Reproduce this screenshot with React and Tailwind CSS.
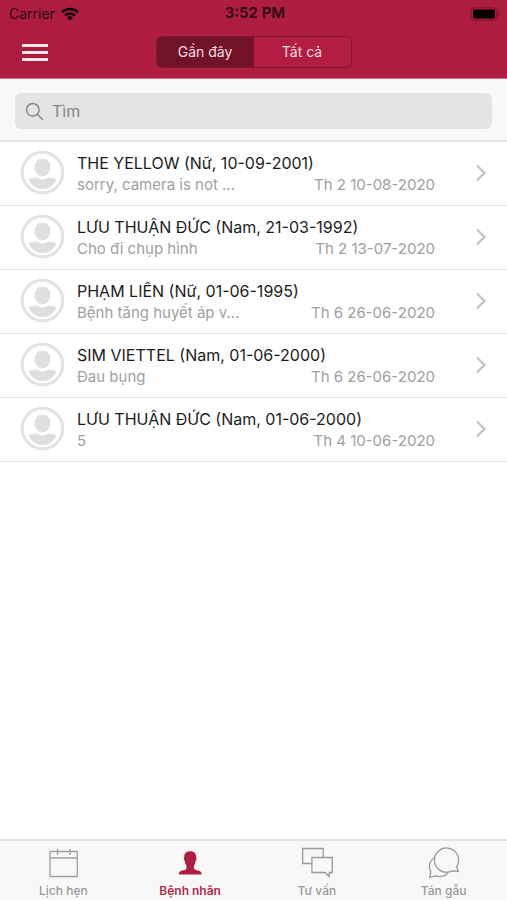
import React, { useState } from 'react';

const patients = [
  { id: 1, name: 'THE YELLOW (Nữ, 10-09-2001)', note: 'sorry, camera is not ...', date: 'Th 2 10-08-2020' },
  { id: 2, name: 'LƯU THUẬN ĐỨC (Nam, 21-03-1992)', note: 'Cho đi chụp hình', date: 'Th 2 13-07-2020' },
  { id: 3, name: 'PHẠM LIÊN (Nữ, 01-06-1995)', note: 'Bệnh tăng huyết áp v...', date: 'Th 6 26-06-2020' },
  { id: 4, name: 'SIM VIETTEL (Nam, 01-06-2000)', note: 'Đau bụng', date: 'Th 6 26-06-2020' },
  { id: 5, name: 'LƯU THUẬN ĐỨC (Nam, 01-06-2000)', note: '5', date: 'Th 4 10-06-2020' },
];

const tabs = [
  { id: 'schedule', label: 'Lịch hẹn', icon: CalendarIcon },
  { id: 'patients', label: 'Bệnh nhân', icon: PersonIcon },
  { id: 'advice', label: 'Tư vấn', icon: AdviceIcon },
  { id: 'chat', label: 'Tán gẫu', icon: ChatIcon },
];

export default function App() {
  const [filter, setFilter] = useState('recent');
  const [tab, setTab] = useState('patients');
  const [query, setQuery] = useState('');

  return (
    <div className="min-h-screen flex flex-col bg-white font-['Inter','Liberation_Sans',sans-serif]">
      <header className="bg-[#ae1c3f] border-b border-[#c9788b]">
        <StatusBar />
        <div className="h-[52px] px-[22px] grid grid-cols-[1fr_196px_1fr] items-center">
          <button type="button" aria-label="Menu" className="w-[26px] flex flex-col gap-1 justify-self-start">
            <span className="h-[3px] w-full bg-[#fbe3ea]"></span>
            <span className="h-[3px] w-full bg-[#fbe3ea]"></span>
            <span className="h-[3px] w-full bg-[#fbe3ea]"></span>
          </button>
          <div className="h-8 flex rounded-md border border-[#7f1530] overflow-hidden text-sm text-[#f8dde4]">
            <Segment label="Gần đây" active={filter === 'recent'} onClick={() => setFilter('recent')} />
            <Segment label="Tất cả" active={filter === 'all'} onClick={() => setFilter('all')} />
          </div>
        </div>
      </header>

      <div className="h-[63px] px-[15px] pt-[14px] bg-[#f8f8f8] border-b-2 border-[#e6e6e6]">
        <label className="h-9 w-full px-[10px] flex items-center gap-2 rounded-md bg-[#e4e4e4]">
          <SearchIcon />
          <input
            type="text"
            aria-label="Tìm"
            placeholder="Tìm"
            value={query}
            onChange={(e) => setQuery(e.target.value)}
            className="flex-1 min-w-0 bg-transparent outline-none text-base text-[#444] placeholder:text-[#858585]"
          />
        </label>
      </div>

      <main className="flex-1">
        <ul>
          {patients.map((p) => (
            <PatientRow key={p.id} patient={p} />
          ))}
        </ul>
      </main>

      <nav className="h-[61px] grid grid-cols-4 bg-[#f8f8f8] border-t-2 border-[#e4e4e4]">
        {tabs.map(({ id, label, icon: Icon }) => (
          <button
            key={id}
            type="button"
            onClick={() => setTab(id)}
            className={`flex flex-col items-center pt-1 text-xs leading-4 ${id === tab ? 'font-semibold text-[#b32a4b]' : 'font-medium text-[#999]'}`}
          >
            <Icon />
            <span className="mt-1">{label}</span>
          </button>
        ))}
      </nav>
    </div>
  );
}

function StatusBar() {
  return (
    <div className="h-[26px] pt-px pl-[9px] pr-[6px] grid grid-cols-3 items-center text-[#2a0a12]">
      <div className="flex items-center gap-[6px]">
        <span className="text-sm">Carrier</span>
        <svg width="18" height="14" viewBox="0 0 18 14" fill="none" stroke="#14030a" strokeWidth="2.6">
          <path d="M1 5.2a11.5 11.5 0 0 1 16 0" />
          <path d="M4.1 8.5a7 7 0 0 1 9.8 0" />
          <path d="M9 13.6 6.1 10.7a4.1 4.1 0 0 1 5.8 0Z" fill="#14030a" stroke="none" />
        </svg>
      </div>
      <span className="text-center text-[15px] font-semibold">3:52 PM</span>
      <svg className="justify-self-end" width="31" height="14" viewBox="0 0 31 14">
        <rect x="0.8" y="0.8" width="26" height="12.4" rx="4" fill="none" stroke="#7a132c" />
        <rect x="3" y="2.5" width="22" height="9" rx="2" fill="#000" />
        <path d="M28.5 5v4a2.2 2.2 0 0 0 0-4Z" fill="#7a132c" />
      </svg>
    </div>
  );
}

function Segment({ label, active, onClick }) {
  return (
    <button
      type="button"
      aria-pressed={active}
      onClick={onClick}
      className={`flex-1 ${active ? 'bg-[#721229]' : 'bg-[#b31d42]'}`}
    >
      {label}
    </button>
  );
}

function PatientRow({ patient }) {
  return (
    <li className="border-b border-[#e6e6e6]">
      <button type="button" className="w-full h-[63px] px-5 pb-[2px] flex items-center text-left">
        <Avatar />
        <div className="flex-1 min-w-0 ml-3">
          <p className="text-base leading-6 text-[#1c1c1c] truncate">{patient.name}</p>
          <div className="flex justify-between text-[15px] leading-5 text-[#a0a0a0]">
            <span>{patient.note}</span>
            <span>{patient.date}</span>
          </div>
        </div>
        <svg className="ml-10 flex-shrink-0" width="12" height="18" viewBox="0 0 12 18" fill="none" stroke="#c4c4c6" strokeWidth="2.3">
          <path d="M2 1.5 9.5 9 2 16.5" />
        </svg>
      </button>
    </li>
  );
}

function Avatar() {
  return (
    <svg className="flex-shrink-0" width="45" height="45" viewBox="0 0 45 45" fill="#dddfe1">
      <circle cx="22.5" cy="22.5" r="20.3" fill="none" stroke="#e0e2e4" strokeWidth="3" />
      <path d="M22.5 8.5c4.800 0 8 3.300 8 8.200 0 5.300-3.700 9.800-8 9.800s-8-4.500-8-9.800c0-4.900 3.200-8.200 8-8.200Z" />
      <path d="M8.500 29.800c1.700-1.600 4.500-2.300 8.300-2.300 1.600 1.200 3.500 1.800 5.700 1.800s4.100-.6 5.700-1.800c3.800 0 6.600.7 8.300 2.300-2.500 5.600-7.600 9.200-14 9.200s-11.500-3.600-14-9.200Z" />
    </svg>
  );
}

function SearchIcon() {
  return (
    <svg className="flex-shrink-0" width="19" height="19" viewBox="0 0 19 19" fill="none" stroke="#888" strokeWidth="1.5">
      <circle cx="7.800" cy="7.800" r="6.300" />
      <path d="m12.300 12.300 5.500 5.500" />
    </svg>
  );
}

function CalendarIcon() {
  return (
    <svg width="34" height="34" viewBox="0 0 34 34" fill="none" stroke="#a0a0a0" strokeWidth="1.300">
      <path d="M4 6.500h27.300v25H4ZM4 13h27.300M11.500 4v6M24 4v6" />
    </svg>
  );
}

function PersonIcon() {
  return (
    <svg width="34" height="34" viewBox="0 0 34 34" fill="#ae1c3f">
      <path d="M17.200 6.300c4 0 6.200 2.200 5.900 6 .6.500.5 2.200-.4 3.600-.2 1.900-.8 3.300-1.700 4.500v3.400c1.200 1.500 3.500 1.600 5.600 2.300 1.300.5 1.900 1.600 2 3.400H5.800c.1-1.800.7-2.900 2-3.400 2.100-.7 4.400-.8 5.600-2.300v-3.400c-.9-1.200-1.500-2.600-1.700-4.500-.9-1.400-1-3.100-.4-3.600-.3-3.800 1.900-6 5.900-6Z" />
    </svg>
  );
}

function AdviceIcon() {
  return (
    <svg width="34" height="34" viewBox="0 0 34 34" fill="none" stroke="#999" strokeWidth="1.300">
      <path d="M11.500 18.500H2.700V3.500h20.500v8.500" />
      <path d="M11.900 12.500h20.400v15h-3v4l-4.500-4H11.900Z" />
    </svg>
  );
}

function ChatIcon() {
  return (
    <svg width="34" height="34" viewBox="0 0 34 34" fill="none" stroke="#999" strokeWidth="1.300">
      <path d="M29.800 21.500A12.100 12.100 0 1 0 25 25.900l6.300.600Z" />
      <path d="M7.300 12.800C2.700 15.600.8 21.200 3.800 26.600l-1 5.800 5.700-1.500c4.500 1.400 10 .5 12.500-3" />
    </svg>
  );
}
